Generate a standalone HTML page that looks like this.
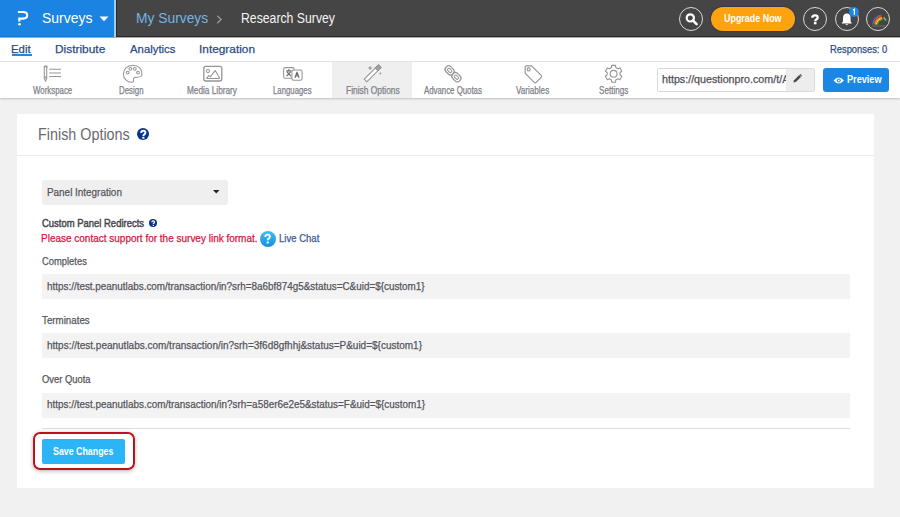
<!DOCTYPE html>
<html><head><meta charset="utf-8">
<style>
*{box-sizing:border-box;margin:0;padding:0}
html,body{width:900px;height:517px;overflow:hidden;background:#f1f1f1;font-family:"Liberation Sans",sans-serif}
.a{position:absolute}
.t{position:absolute;white-space:nowrap;transform-origin:0 0}
svg{position:absolute;overflow:visible}
</style></head><body>
<!-- header -->
<div class="a" style="left:0;top:0;width:900px;height:37px;background:#454545"></div>
<div class="a" style="left:0;top:0;width:114px;height:37px;background:#1b84e2"></div>
<div class="a" style="left:0;top:36px;width:900px;height:1px;background:#282828"></div>
<div class="a" style="left:0;top:36px;width:114px;height:1px;background:#1877d2"></div>
<div class="a" style="left:114px;top:0;width:1.5px;height:37px;background:#9ccff3"></div>
<div class="a" style="left:115.5px;top:0;width:1.5px;height:37px;background:#2a2a2a"></div>
<svg style="left:17px;top:11px" width="12" height="15" viewBox="0 0 12 15">
<path d="M0.9 1H6Q10.2 1 10.2 4.3Q10.2 7.6 6 7.6H2.3V10.6" fill="none" stroke="#fff" stroke-width="2.1"/>
<circle cx="2.5" cy="13.2" r="1.25" fill="#fff"/>
</svg>
<svg style="left:99px;top:16px" width="10" height="6" viewBox="0 0 10 6"><path d="M0.5 0.5H9.5L5 5.2Z" fill="#fff"/></svg>
<svg style="left:216px;top:15px" width="7" height="9" viewBox="0 0 7 9"><path d="M1.2 0.8L5.2 4.5L1.2 8.2" fill="none" stroke="#9a9a9a" stroke-width="1.3"/></svg>
<!-- header right -->
<div class="a" style="left:679px;top:7px;width:24px;height:24px;border:1.5px solid #d9d9d9;border-radius:50%"></div>
<svg style="left:679px;top:7px" width="24" height="24" viewBox="0 0 24 24"><circle cx="11.3" cy="10.9" r="3.6" fill="none" stroke="#fff" stroke-width="2.2"/><path d="M13.8 13.4L17.6 17.2" stroke="#fff" stroke-width="2.6" stroke-linecap="round"/></svg>
<div class="a" style="left:711px;top:7px;width:84px;height:24px;border-radius:12px;background:#fea20f;box-shadow:0 0 0 1px rgba(30,40,80,.35)"></div>
<div class="a" style="left:803px;top:7px;width:24px;height:24px;border:1.5px solid #d9d9d9;border-radius:50%"></div>
<svg style="left:803px;top:7px" width="24" height="24" viewBox="0 0 24 24"><path d="M9.3 10.8Q9.3 8.3 12 8.3Q14.7 8.3 14.7 10.5Q14.7 11.7 13.3 12.4Q12.2 13 12.2 14.3" fill="none" stroke="#fff" stroke-width="2.3"/><rect x="10.9" y="15" width="2.6" height="2.3" fill="#fff"/></svg>
<div class="a" style="left:835px;top:7px;width:24px;height:24px;border:1.5px solid #d9d9d9;border-radius:50%"></div>
<svg style="left:835px;top:7px" width="24" height="24" viewBox="0 0 24 24"><path d="M11.8 6.6Q15.6 6.6 15.6 11.2V14.4L17 16.4H6.6L8 14.4V11.2Q8 6.6 11.8 6.6Z" fill="#fff"/><path d="M10.2 17.2Q11.8 19.2 13.4 17.2Z" fill="#fff"/></svg>
<div class="a" style="left:849px;top:7px;width:10px;height:10px;border-radius:50%;background:#1b87e6"></div>
<svg style="left:849px;top:7px" width="10" height="10" viewBox="0 0 10 10"><path d="M4 3.2L5.4 2.3V7.8" fill="none" stroke="#fff" stroke-width="1.3"/></svg>
<div class="a" style="left:866px;top:7px;width:24px;height:24px;border:1.5px solid #d9d9d9;border-radius:50%"></div>
<svg style="left:866px;top:7px" width="24" height="24" viewBox="0 0 24 24">
<g fill="none" stroke-width="1.25">
<path d="M7 17.5A9.5 9.5 0 0 1 15.5 8" stroke="#2f7fd0"/>
<path d="M8.2 17.5A8.3 8.3 0 0 1 15.8 9.2" stroke="#e53935"/>
<path d="M9.4 17.5A7.1 7.1 0 0 1 16 10.4" stroke="#fb8c00"/>
<path d="M10.6 17.5A5.9 5.9 0 0 1 16.2 11.6" stroke="#fdd835"/>
<path d="M11.8 17.5A4.7 4.7 0 0 1 16.4 12.8" stroke="#43a047"/>
</g>
<path d="M17.6 10.2L20 13.6" stroke="#7cb342" stroke-width="1.8"/>
<path d="M6.5 19H19.5" stroke="#777" stroke-width="0.8"/>
</svg>
<!-- nav -->
<div class="a" style="left:0;top:37px;width:900px;height:24px;background:#fff"></div>
<div class="a" style="left:0;top:61px;width:900px;height:1px;background:#e4e4e4"></div>
<div class="a" style="left:0;top:37px;width:900px;height:1px;background:#ababab"></div>
<div class="a" style="left:12px;top:54px;width:20px;height:2px;background:#1b8ae0"></div>
<!-- toolbar -->
<div class="a" style="left:0;top:62px;width:900px;height:36px;background:#fff;box-shadow:0 1px 2px rgba(0,0,0,.2)"></div>
<div class="a" style="left:332px;top:62px;width:80px;height:36px;background:#efefef"></div>
<!-- URL box -->
<div class="a" style="left:657px;top:68px;width:158px;height:24px;border:1px solid #d8d8d8;border-radius:2px;background:#fff"></div>
<div class="a" style="left:786px;top:69px;width:28px;height:22px;background:#ededed"></div>
<svg style="left:791px;top:73px" width="12" height="12" viewBox="0 0 12 12"><path d="M2.5 9.5L3 7.3L8.2 2.1L10 3.9L4.8 9.1Z" fill="#4a4a4a"/><path d="M8.9 1.4L10.7 3.2" stroke="#4a4a4a" stroke-width="1.2"/></svg>
<div class="a" style="left:823px;top:68px;width:66px;height:24px;border-radius:3px;background:#1c86e5"></div>
<svg style="left:833px;top:76px" width="12" height="9" viewBox="0 0 12 9"><path d="M0.5 4.5Q5.5 -1.5 11 4.5Q5.5 10.5 0.5 4.5Z" fill="#fff"/><circle cx="5.8" cy="4.5" r="1.9" fill="#1c86e5"/><circle cx="5.8" cy="4.5" r="0.9" fill="#fff"/></svg>
<!-- card -->
<div class="a" style="left:17px;top:114px;width:857px;height:374px;background:#fff"></div>
<div class="a" style="left:17px;top:155px;width:857px;height:1px;background:#ececec"></div>
<div class="a" style="left:136.9px;top:127.8px;width:12.5px;height:12.5px;border-radius:50%;background:#08348c"></div>
<svg style="left:137px;top:128px" width="13" height="13" viewBox="0 0 13 13"><path d="M4.2 5.1Q4.2 2.8 6.3 2.8Q8.4 2.8 8.4 4.7Q8.4 5.8 7.3 6.4Q6.4 6.9 6.4 7.9" fill="none" stroke="#fff" stroke-width="1.9"/><rect x="5.3" y="8.8" width="2.1" height="1.9" fill="#fff"/></svg>
<div class="a" style="left:42px;top:180px;width:185.5px;height:24.7px;border-radius:3px;background:#efefef"></div>
<svg style="left:213px;top:190px" width="7" height="4" viewBox="0 0 7 4"><path d="M0 0H6.5L3.25 3.6Z" fill="#222"/></svg>
<div class="a" style="left:148.9px;top:219.1px;width:8.4px;height:8.4px;border-radius:50%;background:#08348c"></div>
<svg style="left:148.9px;top:219.1px" width="9" height="9" viewBox="0 0 9 9"><path d="M2.9 3.3Q2.9 1.9 4.2 1.9Q5.5 1.9 5.5 3.1Q5.5 3.8 4.8 4.2Q4.3 4.5 4.3 5.1" fill="none" stroke="#fff" stroke-width="1.2"/><rect x="3.7" y="5.8" width="1.3" height="1.2" fill="#fff"/></svg>
<div class="a" style="left:259.8px;top:231px;width:16px;height:15.8px;border-radius:50%;background:linear-gradient(#47bdf5,#1390dc)"></div>
<svg style="left:259.8px;top:231px" width="16" height="16" viewBox="0 0 16 16"><path d="M5.3 6Q5.3 3.7 7.6 3.7Q9.9 3.7 9.9 5.7Q9.9 6.9 8.6 7.6Q7.7 8.1 7.7 9.3" fill="none" stroke="#fff" stroke-width="1.8"/><rect x="6.7" y="10.5" width="2" height="2" fill="#fff"/></svg>
<div class="a" style="left:42px;top:274px;width:808px;height:25px;background:#f3f3f3"></div>
<div class="a" style="left:42px;top:333px;width:808px;height:25px;background:#f3f3f3"></div>
<div class="a" style="left:42px;top:393px;width:808px;height:25px;background:#f3f3f3"></div>
<div class="a" style="left:42px;top:428px;width:808px;height:1px;background:#dcdcdc"></div>
<div class="a" style="left:33px;top:432px;width:102px;height:38px;border:2.2px solid #bb121d;border-radius:7px;box-shadow:0 1px 4px rgba(0,0,0,.3)"></div>
<div class="a" style="left:42px;top:438.5px;width:83px;height:25.3px;border-radius:2px;background:#2bb5f7"></div>
<svg style="left:0;top:0" width="900" height="100" viewBox="0 0 900 100">
<g fill="none" stroke="#959595" stroke-width="1.05" stroke-linejoin="round">
<!-- workspace -->
<path d="M44.3 66.5H46.7V78.6L45.5 81.3L44.3 78.6Z"/>
<path d="M44.3 66.3H46.7V68" stroke-width="1.6"/>
<path d="M44.3 77.4H46.7" stroke-width="1.8"/>
<path d="M49.2 69.3H61M49.2 72.9H61M49.2 76.5H61"/>
<!-- design palette -->
<path d="M141.8 75.2C142.6 68.2 137.6 65.2 132.8 65.2C127 65.2 123.4 69.6 123.4 74C123.4 79.4 127.8 82.2 131.6 82.2C133.5 82.2 134 81.1 133.6 79.9C133.2 78.4 134.4 77.2 136.2 77.2C139.2 77.2 141.6 77 141.8 75.2Z"/>
<circle cx="127.6" cy="72.6" r="1.4"/><circle cx="130.4" cy="68.8" r="1.4"/><circle cx="134.8" cy="68.8" r="1.4"/><circle cx="138" cy="72.6" r="1.4"/>
<!-- media -->
<rect x="203.8" y="66.4" width="18" height="14.6" rx="2" stroke-width="1.3"/>
<circle cx="207.9" cy="71.1" r="1.6"/>
<path d="M206.6 78.4L208.8 75.6L210.4 76.6L215.2 70.6L219.3 77.4V78.4Z"/>
<!-- languages -->
<rect x="283.6" y="67.6" width="10.6" height="10.6" rx="1.8"/>
<rect x="291.9" y="69.9" width="10.2" height="10.4" rx="1.8" fill="#fff"/>
<path d="M286.2 70.9H291.4M288.8 69.3V70.9M287 71.9L290.9 76.2M290.6 71.9L286.6 76.2" stroke="#6a6a6a" stroke-width="1.2"/>
<path d="M295 77.8L297 72.2L299 77.8M295.7 76H298.3" stroke="#6a6a6a" stroke-width="1.2"/>
<!-- finish wand -->
<path d="M364.2 79.2L378.5 64.9L381.1 67.5L366.8 81.8Z" fill="#fff"/>
<path d="M378.5 64.9L381.1 67.5L377.9 70.7L375.3 68.1Z" fill="#a0a0a0"/>
<path d="M370.1 66.2L370.6 67.5L371.9 68L370.6 68.5L370.1 69.8L369.6 68.5L368.3 68L369.6 67.5Z" fill="#959595" stroke-width="0.5"/>
<circle cx="380.3" cy="73.5" r="0.9" fill="#959595" stroke="none"/>
<!-- chain -->
<g transform="rotate(45 453 73.8)">
<rect x="443.4" y="70.3" width="9.6" height="7" rx="3.2" stroke-width="1.2"/>
<rect x="453" y="70.3" width="9.6" height="7" rx="3.2" stroke-width="1.2"/>
<rect x="445.8" y="72.4" width="4.8" height="2.8" rx="1.3" stroke-width="1"/>
<rect x="455.4" y="72.4" width="4.8" height="2.8" rx="1.3" stroke-width="1"/>
</g>
<!-- tag -->
<path d="M526.4 65.8H531.6L541.2 75.4Q542.2 76.4 541.2 77.4L536.2 82.4Q535.2 83.4 534.2 82.4L525.2 73.4V67Q525.2 65.8 526.4 65.8Z" stroke-width="1.2"/>
<circle cx="528.7" cy="69.4" r="1.5" fill="#fff" stroke-width="1.1"/>
<!-- settings gear -->
<path transform="translate(613.6 73.8)" d="M-2.15 -6.24 L-1.93 -8.38 L1.93 -8.38 L2.15 -6.24 L4.33 -4.98 L6.29 -5.87 L8.22 -2.51 L6.48 -1.26 L6.48 1.26 L8.22 2.51 L6.29 5.87 L4.33 4.98 L2.15 6.24 L1.93 8.38 L-1.93 8.38 L-2.15 6.24 L-4.33 4.98 L-6.29 5.87 L-8.22 2.51 L-6.48 1.26 L-6.48 -1.26 L-8.22 -2.51 L-6.29 -5.87 L-4.33 -4.98Z" stroke-width="1.1"/>
<circle cx="613.6" cy="73.8" r="3.4" stroke-width="1.1"/>
</g>
</svg>

<div class="t" style="left:41.70px;top:11.06px;font-size:14.78px;line-height:14.78px;transform:scaleX(0.9463);color:#ffffff">Surveys</div>
<div class="t" style="left:135.80px;top:9.69px;font-size:15.22px;line-height:15.22px;transform:scaleX(0.9079);color:#72b4e6">My Surveys</div>
<div class="t" style="left:241.40px;top:10.50px;font-size:14.49px;line-height:14.49px;transform:scaleX(0.8456);color:#f4f4f4">Research Survey</div>
<div class="t" style="left:724.00px;top:12.82px;font-size:11.16px;line-height:11.16px;transform:scaleX(0.8004);color:#ffffff;font-weight:bold">Upgrade Now</div>
<div class="t" style="left:11.00px;top:42.65px;font-size:11.60px;line-height:11.60px;transform:scaleX(0.9814);color:#2a4c85;-webkit-text-stroke:0.25px">Edit</div>
<div class="t" style="left:55.20px;top:42.65px;font-size:11.60px;line-height:11.60px;transform:scaleX(1.0262);color:#2a4c85;-webkit-text-stroke:0.25px">Distribute</div>
<div class="t" style="left:130.10px;top:42.65px;font-size:11.60px;line-height:11.60px;transform:scaleX(0.9787);color:#2a4c85;-webkit-text-stroke:0.25px">Analytics</div>
<div class="t" style="left:199.10px;top:42.65px;font-size:11.60px;line-height:11.60px;transform:scaleX(1.0227);color:#2a4c85;-webkit-text-stroke:0.25px">Integration</div>
<div class="t" style="left:829.50px;top:44.88px;font-size:10.14px;line-height:10.14px;transform:scaleX(0.9249);color:#2a4c85;-webkit-text-stroke:0.25px">Responses: 0</div>
<div class="t" style="left:32.60px;top:85.88px;font-size:10.14px;line-height:10.14px;transform:scaleX(0.7765);color:#7d8089;-webkit-text-stroke:0.25px">Workspace</div>
<div class="t" style="left:119.10px;top:85.88px;font-size:10.14px;line-height:10.14px;transform:scaleX(0.7807);color:#7d8089;-webkit-text-stroke:0.25px">Design</div>
<div class="t" style="left:187.40px;top:85.88px;font-size:10.14px;line-height:10.14px;transform:scaleX(0.8136);color:#7d8089;-webkit-text-stroke:0.25px">Media Library</div>
<div class="t" style="left:273.40px;top:85.88px;font-size:10.14px;line-height:10.14px;transform:scaleX(0.7692);color:#7d8089;-webkit-text-stroke:0.25px">Languages</div>
<div class="t" style="left:345.80px;top:85.88px;font-size:10.14px;line-height:10.14px;transform:scaleX(0.8294);color:#7d8089;-webkit-text-stroke:0.25px">Finish Options</div>
<div class="t" style="left:423.50px;top:85.88px;font-size:10.14px;line-height:10.14px;transform:scaleX(0.7730);color:#7d8089;-webkit-text-stroke:0.25px">Advance Quotas</div>
<div class="t" style="left:516.10px;top:85.88px;font-size:10.14px;line-height:10.14px;transform:scaleX(0.8003);color:#7d8089;-webkit-text-stroke:0.25px">Variables</div>
<div class="t" style="left:598.70px;top:85.88px;font-size:10.14px;line-height:10.14px;transform:scaleX(0.8004);color:#7d8089;-webkit-text-stroke:0.25px">Settings</div>
<div class="a" style="left:658px;top:69px;width:128px;height:22px;overflow:hidden"><div class="t" style="left:3.50px;top:5.88px;font-size:10.14px;line-height:10.14px;transform:scaleX(1.0567);color:#505058;-webkit-text-stroke:0.25px">https://questionpro.com/t/A</div></div>
<div class="t" style="left:846.60px;top:75.10px;font-size:10.00px;line-height:10.00px;transform:scaleX(0.9137);color:#ffffff;font-weight:bold">Preview</div>
<div class="t" style="left:37.60px;top:125.61px;font-size:16.38px;line-height:16.38px;transform:scaleX(0.8777);color:#6a6a6e">Finish Options</div>
<div class="t" style="left:46.70px;top:187.38px;font-size:11.45px;line-height:11.45px;transform:scaleX(0.8660);color:#55555c;-webkit-text-stroke:0.25px">Panel Integration</div>
<div class="t" style="left:41.50px;top:218.34px;font-size:10.90px;line-height:10.90px;transform:scaleX(0.8685);color:#46464c;-webkit-text-stroke:0.45px">Custom Panel Redirects</div>
<div class="t" style="left:40.50px;top:233.34px;font-size:10.90px;line-height:10.90px;transform:scaleX(0.9173);color:#d3163f;-webkit-text-stroke:0.25px">Please contact support for the survey link format.</div>
<div class="t" style="left:278.60px;top:232.58px;font-size:10.50px;line-height:10.50px;transform:scaleX(0.9087);color:#3b5a95;-webkit-text-stroke:0.25px">Live Chat</div>
<div class="t" style="left:41.60px;top:256.60px;font-size:10.00px;line-height:10.00px;transform:scaleX(0.9376);color:#57575e;-webkit-text-stroke:0.25px">Completes</div>
<div class="t" style="left:42.30px;top:315.90px;font-size:10.00px;line-height:10.00px;transform:scaleX(0.9752);color:#57575e;-webkit-text-stroke:0.25px">Terminates</div>
<div class="t" style="left:41.60px;top:375.10px;font-size:10.00px;line-height:10.00px;transform:scaleX(0.9374);color:#57575e;-webkit-text-stroke:0.25px">Over Quota</div>
<div class="t" style="left:47.30px;top:281.21px;font-size:10.70px;line-height:10.70px;transform:scaleX(0.9244);color:#55555c;-webkit-text-stroke:0.25px">https://test.peanutlabs.com/transaction/in?srh=8a6bf874g5&amp;status=C&amp;uid=${custom1}</div>
<div class="t" style="left:47.30px;top:339.81px;font-size:10.70px;line-height:10.70px;transform:scaleX(0.9343);color:#55555c;-webkit-text-stroke:0.25px">https://test.peanutlabs.com/transaction/in?srh=3f6d8gfhhj&amp;status=P&amp;uid=${custom1}</div>
<div class="t" style="left:47.30px;top:398.71px;font-size:10.70px;line-height:10.70px;transform:scaleX(0.9269);color:#55555c;-webkit-text-stroke:0.25px">https://test.peanutlabs.com/transaction/in?srh=a58er6e2e5&amp;status=F&amp;uid=${custom1}</div>
<div class="t" style="left:53.10px;top:446.40px;font-size:11.30px;line-height:11.30px;transform:scaleX(0.7819);color:#ffffff;font-weight:bold">Save Changes</div>
</body></html>
